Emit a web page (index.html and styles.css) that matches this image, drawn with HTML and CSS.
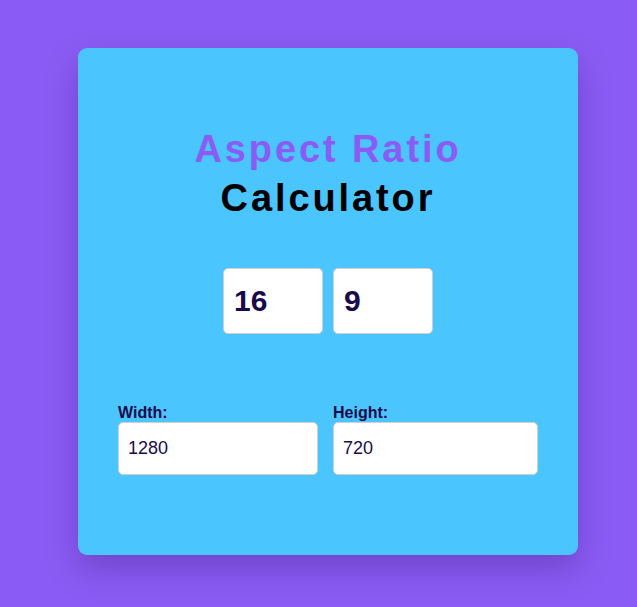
FILE: index.html
```html
<!DOCTYPE html>
<html lang="en">
<head>
<meta charset="utf-8">
<title>Aspect Ratio Calculator</title>
<link rel="stylesheet" href="styles.css">
</head>
<body>
<main class="page">
  <section class="card">
    <h1 class="title"><span class="title-accent">Aspect Ratio</span><span class="title-main">Calculator</span></h1>
    <div class="ratio">
      <input class="ratio-input" type="text" value="16">
      <input class="ratio-input" type="text" value="9">
    </div>
    <div class="dims">
      <label class="field">
        <span class="field-label">Width:</span>
        <input class="field-input" type="text" value="1280">
      </label>
      <label class="field">
        <span class="field-label">Height:</span>
        <input class="field-input" type="text" value="720">
      </label>
    </div>
  </section>
</main>
</body>
</html>
```

FILE: styles.css
```css
* { box-sizing: border-box; }
html, body {
  margin: 0;
  height: 100%;
  background: #8b5cf5;
  font-family: "Liberation Sans", Arial, sans-serif;
  color: #190b4a;
}
.page {
  padding: 48px 0 0 78px;
}
.card {
  width: 500px;
  height: 507px;
  background: #4ac5fe;
  border-radius: 9px;
  padding: 77px 40px 40px;
  box-shadow: 0 14px 32px rgba(40, 10, 90, 0.28);
}
.title {
  margin: 0;
  font-size: 38px;
  line-height: 49px;
  font-weight: 700;
  letter-spacing: 2.9px;
  text-align: center;
}
.title-accent, .title-main { display: block; }
.title-accent { color: #8b5cf5; }
.title-main { color: #000; }
.ratio {
  display: flex;
  justify-content: center;
  gap: 10px;
  margin-top: 45px;
}
.ratio-input {
  width: 100px;
  height: 66px;
  border: 1px solid #cfcfcf;
  border-radius: 5px;
  padding: 0 10px;
  font-family: "Liberation Sans", Arial, sans-serif;
  font-size: 30px;
  font-weight: 700;
  color: #190b4a;
  background: #fff;
  outline: none;
}
.dims {
  display: grid;
  grid-template-columns: 200px 205px;
  column-gap: 15px;
  margin-top: 70px;
}
.field { display: flex; flex-direction: column; }
.field-label {
  font-size: 16px;
  font-weight: 700;
  line-height: 18px;
}
.field-input {
  width: 100%;
  height: 53px;
  border: 1px solid #cfcfcf;
  border-radius: 5px;
  padding: 0 9px;
  font-family: "Liberation Sans", Arial, sans-serif;
  font-size: 18px;
  color: #190b4a;
  background: #fff;
  outline: none;
}
```
